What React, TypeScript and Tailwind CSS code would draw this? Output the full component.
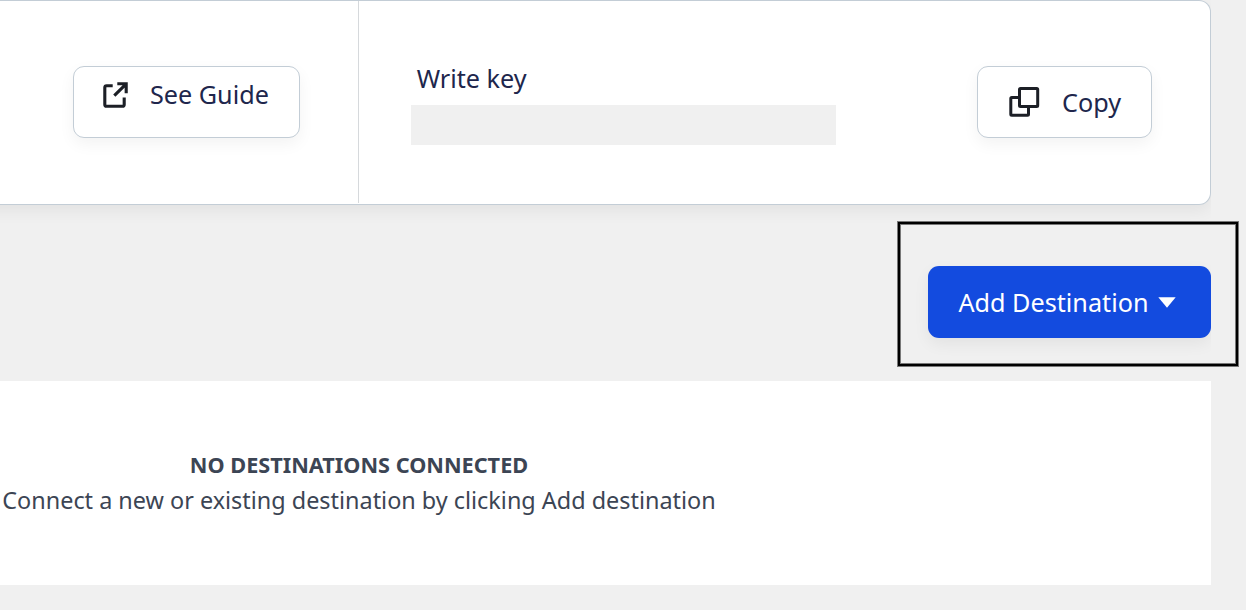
import type { ReactNode } from "react";

function ExternalIcon() {
  return (
    <svg className="block shrink-0" width="28" height="28" viewBox="0 0 28 28" fill="none" stroke="#1c1f26" strokeWidth="3.100">
      <path d="M10.700 4.800H4.600Q2.800 4.800 2.800 6.600V23.400Q2.800 25.200 4.600 25.200H20.400Q22.200 25.200 22.200 23.400V16.500" />
      <path d="M15.300 2.800H24.200V12.300M23.700 3.300L12.300 14.700" />
    </svg>
  );
}

function CopyIcon() {
  return (
    <svg className="block shrink-0" width="32" height="32" viewBox="0 0 32 32" fill="none" stroke="#1c1f26" strokeWidth="3">
      <rect x="10.500" y="2.500" width="18.200" height="18" rx="1" />
      <path d="M10.500 11.500H2.800Q1.800 11.500 1.800 12.500V28.200Q1.800 29.200 2.800 29.200H18.500Q19.500 29.200 19.500 28.200V20.500" />
    </svg>
  );
}

function OutlineButton({ className, children }: { className: string; children: ReactNode }) {
  return (
    <button
      className={`flex h-[72px] rounded-[11px] border border-[#c3cdd6] bg-white text-[25.2px] leading-9 text-[#20264c] shadow-[0_6px_16px_rgba(0,0,0,0.05)] ${className}`}
    >
      {children}
    </button>
  );
}

export default function App() {
  return (
    <div className="relative h-[610px] w-[1246px] overflow-hidden bg-[#f0f0f0] font-['Noto_Sans',sans-serif]">
      <main className="flex h-full w-[1211px] flex-col overflow-hidden">
        <section className="-ml-8 flex h-[205px] shrink-0 rounded-r-[12px] border border-l-0 border-[#c3cdd6] bg-white pl-8 shadow-[0_6px_16px_rgba(0,0,0,0.06)]">
          <div className="mb-px flex w-[359px] justify-end border-r border-[#d6d9dc] pt-[65px] pr-[58px]">
            <OutlineButton className="w-[227px] gap-[20px] pt-[9px] pl-[28px]">
              <span className="pt-[5px]">
                <ExternalIcon />
              </span>
              <span className="whitespace-nowrap">See Guide</span>
            </OutlineButton>
          </div>
          <div className="flex flex-1 justify-between pr-[58px] pl-[52px]">
            <div className="pt-[59px]">
              <p className="h-[45px] pl-[5.700px] text-[25.2px] leading-9 text-[#20264c]">Write key</p>
              <div className="h-[40px] w-[425px] bg-[#f0f0f0]" />
            </div>
            <div className="pt-[65px]">
              <OutlineButton className="w-[175px] items-center gap-[21px] pl-[31px]">
                <CopyIcon />
                <span>Copy</span>
              </OutlineButton>
            </div>
          </div>
        </section>

        <div className="flex h-[176px] shrink-0 justify-end pt-[61px]">
          <button className="flex h-[72px] w-[283px] items-center gap-[10px] rounded-[11px] bg-[#134bdf] pl-[30.500px] text-[25.2px] leading-9 text-white shadow-[0_6px_16px_rgba(0,0,0,0.06)]">
            <span className="whitespace-nowrap">Add Destination</span>
            <svg width="18" height="11" viewBox="0 0 18 11" fill="white">
              <path d="M0.300 0.300H17.700L9 10.700Z" />
            </svg>
          </button>
        </div>

        <section className="h-[204px] shrink-0 bg-white pt-[67px]">
          <div className="w-[718px] whitespace-nowrap text-center text-[#3c4554]">
            <h2 className="text-[21.7px] leading-[34px] font-bold">NO DESTINATIONS CONNECTED</h2>
            <p className="text-[23.42px] leading-[36px]">Connect a new or existing destination by clicking Add destination</p>
          </div>
        </section>
      </main>

      <div className="pointer-events-none absolute top-[222px] left-[898px] h-[144px] w-[340px] border-2 border-black shadow-[0_0_0_1px_rgba(0,0,0,0.5),inset_0_0_0_1px_rgba(0,0,0,0.5)]" />
    </div>
  );
}
